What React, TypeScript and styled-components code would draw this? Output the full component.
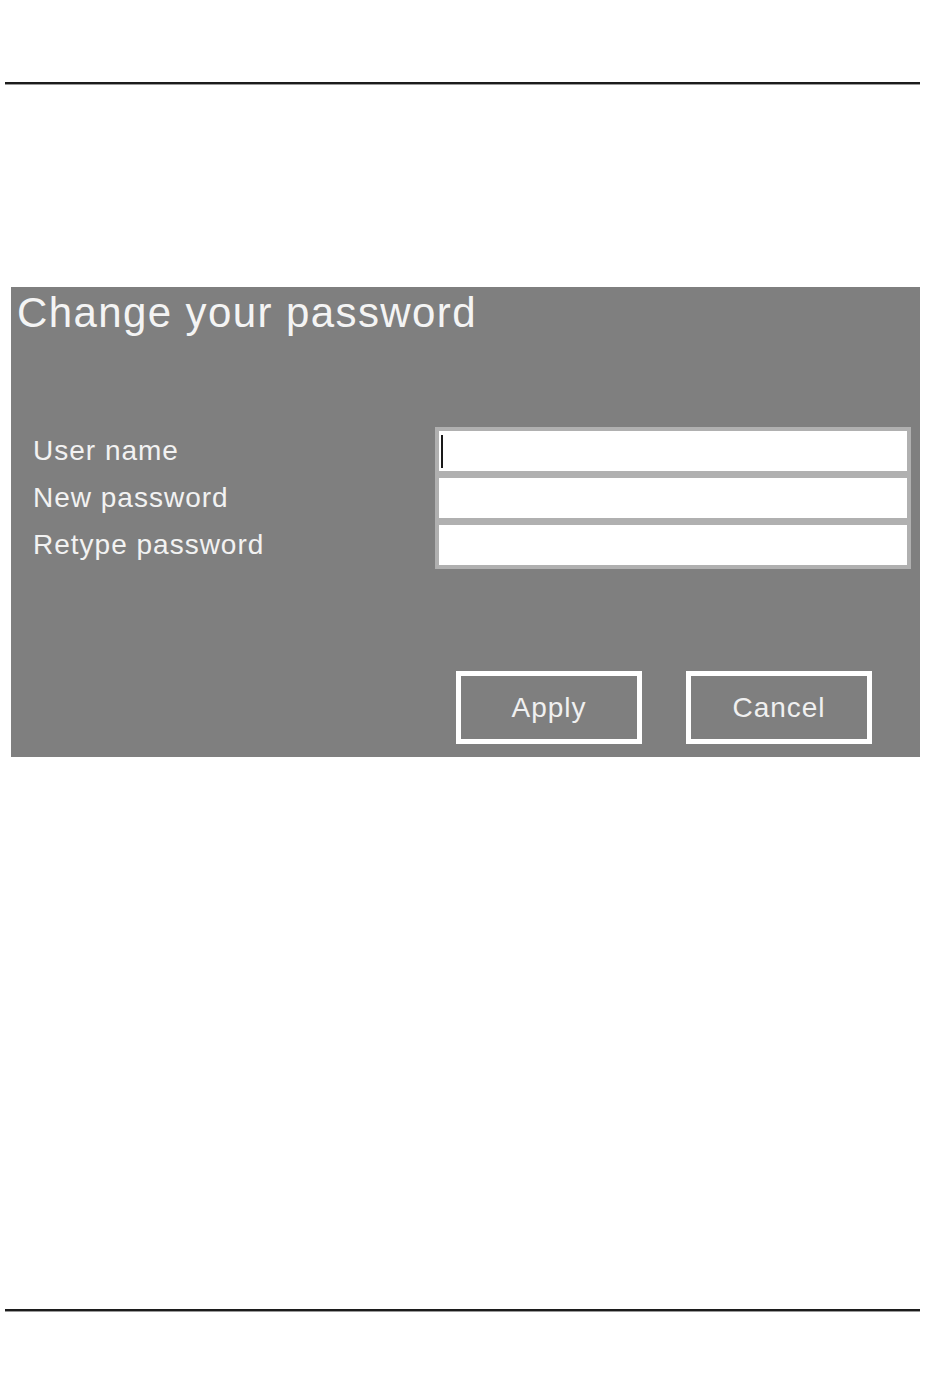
import React from "react";
import styled, { createGlobalStyle } from "styled-components";

const GlobalStyle = createGlobalStyle`
  html, body {
    margin: 0;
    padding: 0;
    background: #ffffff;
  }
  body {
    font-family: "Liberation Sans", Arial, sans-serif;
  }
`;

const Page = styled.div`
  width: 950px;
  height: 1379px;
  display: flex;
  flex-direction: column;
  padding-top: 82px;
  box-sizing: border-box;
`;

const Rule = styled.div<{ $above?: number; $below?: number }>`
  margin-left: 5px;
  width: 915px;
  height: 2px;
  background: #1c1c1c;
  box-shadow: 0 1px 0 #9a9a9a;
  margin-top: ${(p) => p.$above ?? 0}px;
  margin-bottom: ${(p) => p.$below ?? 0}px;
`;

const Panel = styled.section`
  margin-left: 11px;
  width: 909px;
  height: 470px;
  background: #7f7f7f;
  box-sizing: border-box;
  padding: 5px 9px 13px 6px;
  display: flex;
  flex-direction: column;
  color: #f4f4f4;
`;

const Title = styled.h1`
  margin: 0 0 93px 0;
  font-size: 42px;
  line-height: 42px;
  font-weight: normal;
  letter-spacing: 1.4px;
`;

const Form = styled.div`
  display: grid;
  grid-template-columns: 1fr 476px;
`;

const Labels = styled.div`
  display: flex;
  flex-direction: column;
  gap: 7px;
  padding: 4px 0 4px 16px;
`;

const Label = styled.label`
  height: 40px;
  display: flex;
  align-items: center;
  font-size: 28px;
  letter-spacing: 1px;
  color: #f2f2f2;
`;

const FieldGroup = styled.div`
  background: #b0b0b0;
  padding: 4px;
  display: flex;
  flex-direction: column;
  gap: 7px;
`;

const Field = styled.div`
  height: 40px;
  background: #ffffff;
  display: flex;
  align-items: center;
  padding-left: 2px;
`;

const Caret = styled.span`
  width: 2px;
  height: 33px;
  background: #1a1a1a;
`;

const Actions = styled.div`
  display: flex;
  gap: 44px;
  margin-top: 102px;
  padding-left: 439px;
`;

const Button = styled.button`
  width: 186px;
  height: 73px;
  box-sizing: border-box;
  border: 5px solid #ffffff;
  background: #7f7f7f;
  color: #f0f0f0;
  font-family: "Liberation Sans", Arial, sans-serif;
  font-size: 28px;
  letter-spacing: 1px;
  padding: 0;
  cursor: pointer;
`;

export default function App() {
  return (
    <>
      <GlobalStyle />
      <Page>
        <Rule $below={203} />
        <Panel>
          <Title>Change your password</Title>
          <Form>
            <Labels>
              <Label>User name</Label>
              <Label>New password</Label>
              <Label>Retype password</Label>
            </Labels>
            <FieldGroup>
              <Field>
                <Caret />
              </Field>
              <Field />
              <Field />
            </FieldGroup>
          </Form>
          <Actions>
            <Button>Apply</Button>
            <Button>Cancel</Button>
          </Actions>
        </Panel>
        <Rule $above={552} />
      </Page>
    </>
  );
}
